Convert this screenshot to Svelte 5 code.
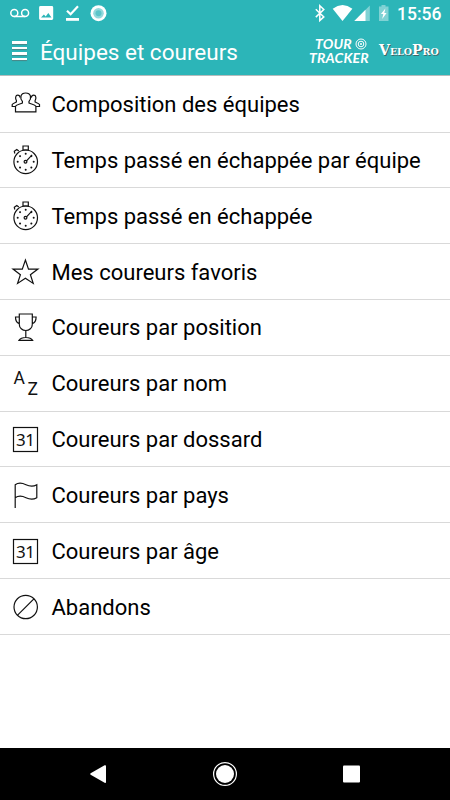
<script lang="ts">
  type Icon = "team" | "watch" | "star" | "cup" | "az" | "day" | "flag" | "none";

  const items: { icon: Icon; label: string }[] = [
    { icon: "team",  label: "Composition des équipes" },
    { icon: "watch", label: "Temps passé en échappée par équipe" },
    { icon: "watch", label: "Temps passé en échappée" },
    { icon: "star",  label: "Mes coureurs favoris" },
    { icon: "cup",   label: "Coureurs par position" },
    { icon: "az",    label: "Coureurs par nom" },
    { icon: "day",   label: "Coureurs par dossard" },
    { icon: "flag",  label: "Coureurs par pays" },
    { icon: "day",   label: "Coureurs par âge" },
    { icon: "none",  label: "Abandons" },
  ];

  // Hour marks on the stopwatch dial
  const marks = [0, 45, 90, 135, 180, 225, 270, 315];
</script>

<div class="screen">
  <header>
    <div class="status">
      <!-- Voicemail, picture, download done, recording -->
      <svg class="notices" width="110" height="26" viewBox="0 0 110 26" fill="#fff">
        <g fill="none" stroke="#fff" stroke-width="1.5">
          <circle cx="14.3" cy="13" r="3.5"/>
          <circle cx="25.1" cy="13" r="3.5"/>
          <path d="M14.3 16.5h10.8"/>
        </g>
        <path fill-rule="evenodd" d="M40.5 6h11.3a1.4 1.4 0 0 1 1.4 1.4v11.2a1.4 1.4 0 0 1-1.4 1.4H40.5a1.4 1.4 0 0 1-1.4-1.4V7.4a1.4 1.4 0 0 1 1.4-1.4zM41 17.6h10.5l-3.2-4.5-2.6 3.3-1.8-2z"/>
        <path d="M67 10.800l3.600 3.400 7.400-8" fill="none" stroke="#fff" stroke-width="2.2"/>
        <rect x="66" y="18" width="13" height="2.8"/>
        <circle cx="98.5" cy="13.2" r="8"/>
        <circle cx="98.5" cy="13.2" r="5.3" fill="#94d9dc"/>
        <circle cx="98.5" cy="13.2" r="3" fill="#5cc5c9"/>
      </svg>

      <!-- Bluetooth, wifi, signal, battery -->
      <svg class="radios" width="80" height="26" viewBox="310 0 80 26" fill="#fff">
        <path d="M315.8 9.3l8 7.6-4 3.7V5.8l4 3.7-8 7.6" fill="none" stroke="#fff" stroke-width="1.5"/>
        <path d="M332.7 8.7q9.9-7.2 19.7 0L342.5 21z"/>
        <path d="M369.8 5.5V21H354.3z" opacity=".4"/>
        <path d="M365.5 9.8V21H354.3z"/>
        <path d="M379 6.6h2.5V5h4v1.600h3V21H379z" opacity=".4"/>
        <path d="M385.4 8.6l-4.5 5.5h2.4l-1.1 5 4.4-6h-2.3z"/>
      </svg>
      <span class="clock">15:56</span>
    </div>

    <div class="bar">
      <button class="menu" aria-label="Menu"><i></i><i></i><i></i><i></i></button>
      <h1>Équipes et coureurs</h1>
      <div class="tour">
        <div class="tour-top">
          <span>TOUR</span>
          <svg width="12" height="12" viewBox="0 0 12 12" fill="none" stroke="#fff">
            <circle cx="6" cy="6" r="5"/>
            <circle cx="6" cy="6" r="2.8"/>
            <circle cx="6" cy="6" r="1" fill="#fff" stroke="none"/>
          </svg>
        </div>
        <div>TRACKER</div>
      </div>
      <div class="velo"><span class="cap">V</span>ELO<span class="cap">P</span>RO</div>
    </div>
  </header>

  <ul>
    {#each items as item}
      <li>
        <svg class="icon" viewBox="0 0 36 36">
          {#if item.icon === "team"}
            <path d="M9.5 20.500H4.200v-2c1-1.500 3-1.700 4.200-2.500v-1.500c-1.300-2-1.100-5.300 1.400-5.300 1.400 0 2.200.9 2.400 2.400M25.500 20.500h6v-2c-1-1.500-3.200-1.700-4.400-2.500v-1.500c1.300-2 1.100-5.300-1.400-5.300-1.400 0-2.200.9-2.400 2.400"/>
            <path d="M7.500 25.800v-5.600c.9-1.500 4-2 6.900-3.200v-1.700c-2.700-3-2.200-8.300 3.300-8.300s6 5.300 3.300 8.300V17c2.900 1.200 6 1.700 6.900 3.200v5.600z" fill="#fff"/>
          {:else if item.icon === "watch"}
            <circle cx="17.7" cy="19.800" r="11.8"/>
            <path d="M15 4h5.300v4H15zM6.800 11.500l-.5-2.200 2.500-1.900 2 1.500M18.500 18.800l5.600-6"/>
            <circle cx="17.500" cy="19.800" r="1.400"/>
            {#each marks as angle}
              <circle class="dot" cx="17.700" cy="11.800" r="1" transform="rotate({angle} 17.7 19.8)"/>
            {/each}
          {:else if item.icon === "star"}
            <path d="M17.400 6l3.100 9.100h9.400l-7.500 5.700 2.800 8.600-7.800-5.200-7.800 5.200 2.800-8.600L5 15.100h9.300z"/>
          {:else if item.icon === "cup"}
            <path d="M11.300 5h13v10.500c0 3.500-3 6-6.500 6s-6.500-2.500-6.500-6zM11.300 8H7.500c0 4 .8 5.700 3.800 6.600M24.300 8h3.800c0 4-.8 5.700-3.800 6.600M17.800 21.500v7M11 31.300c1-1.700 4-2.800 6.800-2.800s5.800 1.100 6.800 2.800z"/>
          {:else if item.icon === "az"}
            <text class="letter" x="5.500" y="18.500">A</text>
            <text class="letter" x="19.500" y="30">Z</text>
          {:else if item.icon === "day"}
            <rect x="5.500" y="6.500" width="24" height="24"/>
            <text class="date" x="8" y="24.500" textLength="19">31</text>
          {:else if item.icon === "flag"}
            <path d="M7.200 31V7.700c3.500-2.500 7.500-1.600 10.800 0s7 2.200 10.800 0v13c-3.800 2.200-7.500 1.600-10.800 0s-7.300-2.300-10.800 0"/>
          {:else}
            <circle cx="17.700" cy="18" r="11.700"/>
            <path d="M9.600 26.200L25.900 9.900"/>
          {/if}
        </svg>
        <span class="label">{item.label}</span>
      </li>
    {/each}
  </ul>

  <nav>
    <svg width="28" height="28" viewBox="0 0 28 28"><path d="M6.600 13.200L20.600 5.300q1.400-.6 1.400.9v15.800q0 1.500-1.400.8L6.600 14.800q-1-.8 0-1.600z"/></svg>
    <svg width="28" height="28" viewBox="0 0 28 28">
      <circle cx="14" cy="14" r="9"/>
      <circle cx="14" cy="14" r="11.400" fill="none" stroke="#fff" stroke-width="1.200"/>
    </svg>
    <svg width="28" height="28" viewBox="0 0 28 28"><rect x="6" y="5.500" width="17" height="17" rx="1"/></svg>
  </nav>
</div>

<style>
  :global(body) { margin: 0; }

  .screen {
    display: flex;
    flex-direction: column;
    width: 450px;
    height: 800px;
    overflow: hidden;
    background: #fff;
    font-family: Roboto, sans-serif;
    color: #000;
  }

  header {
    height: 75px;
    flex-shrink: 0;
    background: #2cb5b8;
    border-bottom: 1px solid #b5bcbc;
    color: #fff;
  }

  .status {
    display: flex;
    height: 26px;
  }
  .radios { margin-left: auto; }
  .clock {
    width: 60px;
    padding-left: 7px;
    box-sizing: border-box;
    font-size: 17.5px;
    font-weight: 500;
    line-height: 28px;
    white-space: nowrap;
  }

  .bar {
    display: flex;
    align-items: center;
    height: 49px;
    padding-left: 12px;
  }

  .menu {
    display: flex;
    flex-direction: column;
    gap: 3px;
    width: 15px;
    padding: 0;
    margin-right: 13px;
    background: none;
    border: none;
  }
  .menu i {
    height: 2.5px;
    background: #fff;
    box-shadow: 0 1px 1px #4b8587;
  }

  h1 {
    margin: 2px 0 0;
    width: 269px;
    font-size: 22.5px;
    font-weight: 400;
    white-space: nowrap;
  }

  .tour {
    width: 62px;
    margin-right: 8px;
    font-family: Lato, sans-serif;
    font-size: 14px;
    font-style: italic;
    font-weight: 700;
    line-height: 14px;
    letter-spacing: 0.2px;
  }
  .tour-top {
    display: flex;
    align-items: center;
    gap: 3px;
    padding-left: 6px;
  }

  .velo {
    width: 62px;
    font: bold 9.5px/16px "DejaVu Serif", serif;
    text-shadow: 1px 1px 0 #3d6668;
    white-space: nowrap;
  }
  .velo .cap { font-size: 14px; }

  ul {
    flex: 1;
    margin: 0;
    padding: 0.8px 0 0;
    list-style: none;
  }

  li {
    display: flex;
    align-items: center;
    gap: 8px;
    height: 55.82px;
    padding-left: 8px;
    box-sizing: border-box;
    border-bottom: 1px solid #d9d9d9;
    font-size: 22px;
    white-space: nowrap;
  }
  .label {
    padding-top: 1px;
    margin-left: -0.5px;
  }

  .icon {
    width: 36px;
    height: 36px;
    fill: none;
    stroke: #111;
    stroke-width: 1.2;
  }
  .icon text, .icon .dot { fill: #111; stroke: none; }
  .letter { font-size: 17.5px; }
  .date { font: 17px "Noto Sans", sans-serif; }

  nav {
    display: flex;
    align-items: center;
    justify-content: space-between;
    height: 52px;
    padding: 0 85px 0 84px;
    flex-shrink: 0;
    background: #000;
  }
  nav svg { fill: #fff; }
</style>
